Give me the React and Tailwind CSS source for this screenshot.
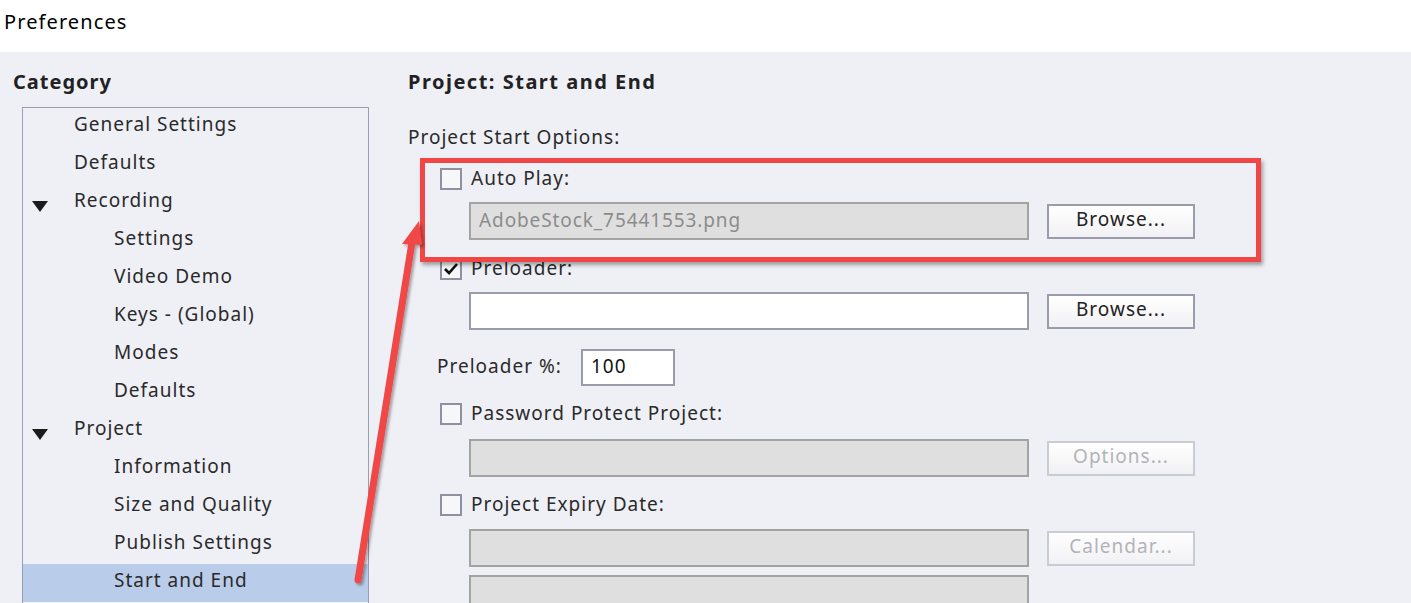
import React from "react";

const font = { fontFamily: '"Noto Sans", "Open Sans", sans-serif' };

function Checkbox({ checked }) {
  return (
    <div className="w-[22px] h-[22px] border-2 border-[#8f91a3] bg-[#f7f7fa] flex items-center justify-center shrink-0">
      {checked && (
        <svg width="16" height="14" viewBox="0 0 16 14">
          <path d="M2 7 L6 11 L14 2" fill="none" stroke="#111" strokeWidth="2.6" />
        </svg>
      )}
    </div>
  );
}

function TextBox({ value, disabled, className = "" }) {
  return (
    <div
      className={
        "h-[38px] w-[560px] border-2 flex items-center px-[8px] pb-[2px] text-[19px] tracking-[0.9px] " +
        (disabled
          ? "bg-[#dfdfdf] border-[#a3a3a3] text-[#8c8c8c] "
          : "bg-white border-[#9a9cab] text-[#222] ") +
        className
      }
    >
      {value}
    </div>
  );
}

function Button({ label, disabled }) {
  return (
    <div
      className={
        "h-[35px] w-[148px] border-2 flex items-center justify-center pb-[3px] text-[19px] tracking-[1px] bg-gradient-to-b from-white to-[#f1f1f4] " +
        (disabled ? "border-[#cbccd3] text-[#b3b3b8]" : "border-[#9a9cab] text-[#222]")
      }
    >
      {label}
    </div>
  );
}

function Tri() {
  return (
    <svg width="16" height="11" viewBox="0 0 16 11" className="ml-[9px] mt-[6px]">
      <polygon points="0,0 16,0 8,11" fill="#1b1b1b" />
    </svg>
  );
}

const tree = [
  { label: "General Settings", level: 1 },
  { label: "Defaults", level: 1 },
  { label: "Recording", level: 1, tri: true },
  { label: "Settings", level: 2 },
  { label: "Video Demo", level: 2 },
  { label: "Keys - (Global)", level: 2 },
  { label: "Modes", level: 2 },
  { label: "Defaults", level: 2 },
  { label: "Project", level: 1, tri: true },
  { label: "Information", level: 2 },
  { label: "Size and Quality", level: 2 },
  { label: "Publish Settings", level: 2 },
  { label: "Start and End", level: 2, selected: true },
];

export default function App() {
  return (
    <div className="relative w-[1411px] h-[603px] overflow-hidden bg-[#eff0f6] text-[#2a2a2a]" style={font}>
      <div className="h-[52px] bg-white flex items-center pl-[4px] text-[20px] tracking-[1.1px] text-black pb-[8px]">
        Preferences
      </div>
      <div className="flex">
        {/* Left */}
        <div className="w-[380px] shrink-0 pt-[16px]">
          <div className="h-[28px] pl-[13px] font-bold text-[20px] leading-[28px] tracking-[1px] text-[#222]">Category</div>
          <div className="mt-[11px] ml-[22px] w-[347px] border border-b-0 border-[#9c9db0] h-[520px]">
            {tree.map((t, i) => (
              <div
                key={i}
                className={
                  "h-[38px] flex items-center text-[19px] tracking-[1px] " + (t.selected ? "bg-[#b9cdea]" : "")
                }
              >
                <div className="w-[51px] shrink-0 flex items-center">{t.tri && <Tri />}</div>
                <div className={"pb-[6px] " + (t.level === 2 ? "pl-[40px]" : "")}>{t.label}</div>
              </div>
            ))}
          </div>
        </div>

        {/* Right */}
        <div className="pl-[28px] pt-[16px] text-[19px] tracking-[1px]">
          <div className="h-[28px] font-bold text-[20px] leading-[28px] tracking-[1.5px] text-[#222]">Project: Start and End</div>
          <div className="mt-[27px] h-[28px] leading-[28px]">Project Start Options:</div>

          <div className="mt-[17px] h-[22px] flex items-center ml-[32px] gap-[9px]">
            <Checkbox />
            <span className="pb-[1px]">Auto Play:</span>
          </div>
          <div className="mt-[12px] flex items-center ml-[61px] gap-[18px]">
            <TextBox value="AdobeStock_75441553.png" disabled />
            <Button label="Browse..." />
          </div>

          <div className="mt-[18px] h-[22px] flex items-center ml-[32px] gap-[9px]">
            <Checkbox checked />
            <span className="pb-[1px]">Preloader:</span>
          </div>
          <div className="mt-[12px] flex items-center ml-[61px] gap-[18px]">
            <TextBox value="" className="h-[37px]" />
            <Button label="Browse..." />
          </div>

          <div className="mt-[19px] flex items-center ml-[29px]">
            <span className="w-[144px] pb-[2px]">Preloader %:</span>
            <div className="h-[37px] w-[94px] border-2 border-[#9a9cab] bg-white flex items-center px-[8px] pb-[2px] text-[#111]">
              100
            </div>
          </div>

          <div className="mt-[17px] h-[22px] flex items-center ml-[32px] gap-[9px]">
            <Checkbox />
            <span className="pb-[1px]">Password Protect Project:</span>
          </div>
          <div className="mt-[14px] flex items-center ml-[61px] gap-[18px]">
            <TextBox value="" disabled />
            <Button label="Options..." disabled />
          </div>

          <div className="mt-[17px] h-[22px] flex items-center ml-[32px] gap-[9px]">
            <Checkbox />
            <span className="pb-[1px]">Project Expiry Date:</span>
          </div>
          <div className="mt-[13px] flex items-center ml-[61px] gap-[18px]">
            <TextBox value="" disabled />
            <Button label="Calendar..." disabled />
          </div>
          <div className="mt-[8px] flex items-center ml-[61px]">
            <TextBox value="" disabled />
          </div>
        </div>
      </div>

      {/* Annotation: red box */}
      <div className="absolute left-[420px] top-[158px] w-[841px] h-[104px] border-[5px] border-[#f04646] shadow-[2px_3px_4px_rgba(0,0,0,0.35)] pointer-events-none" />

      {/* Annotation: arrow */}
      <svg className="absolute left-0 top-0 pointer-events-none" width="1411" height="603" viewBox="0 0 1411 603">
        <defs>
          <filter id="sh" x="-20%" y="-20%" width="140%" height="140%">
            <feDropShadow dx="2" dy="2" stdDeviation="1.5" floodColor="#000" floodOpacity="0.35" />
          </filter>
        </defs>
        <g filter="url(#sh)">
          <line x1="358" y1="580" x2="413" y2="236" stroke="#f04646" strokeWidth="7" strokeLinecap="round" />
          <polygon points="419,221 402,244 422,245" fill="#f04646" />
        </g>
      </svg>
    </div>
  );
}
